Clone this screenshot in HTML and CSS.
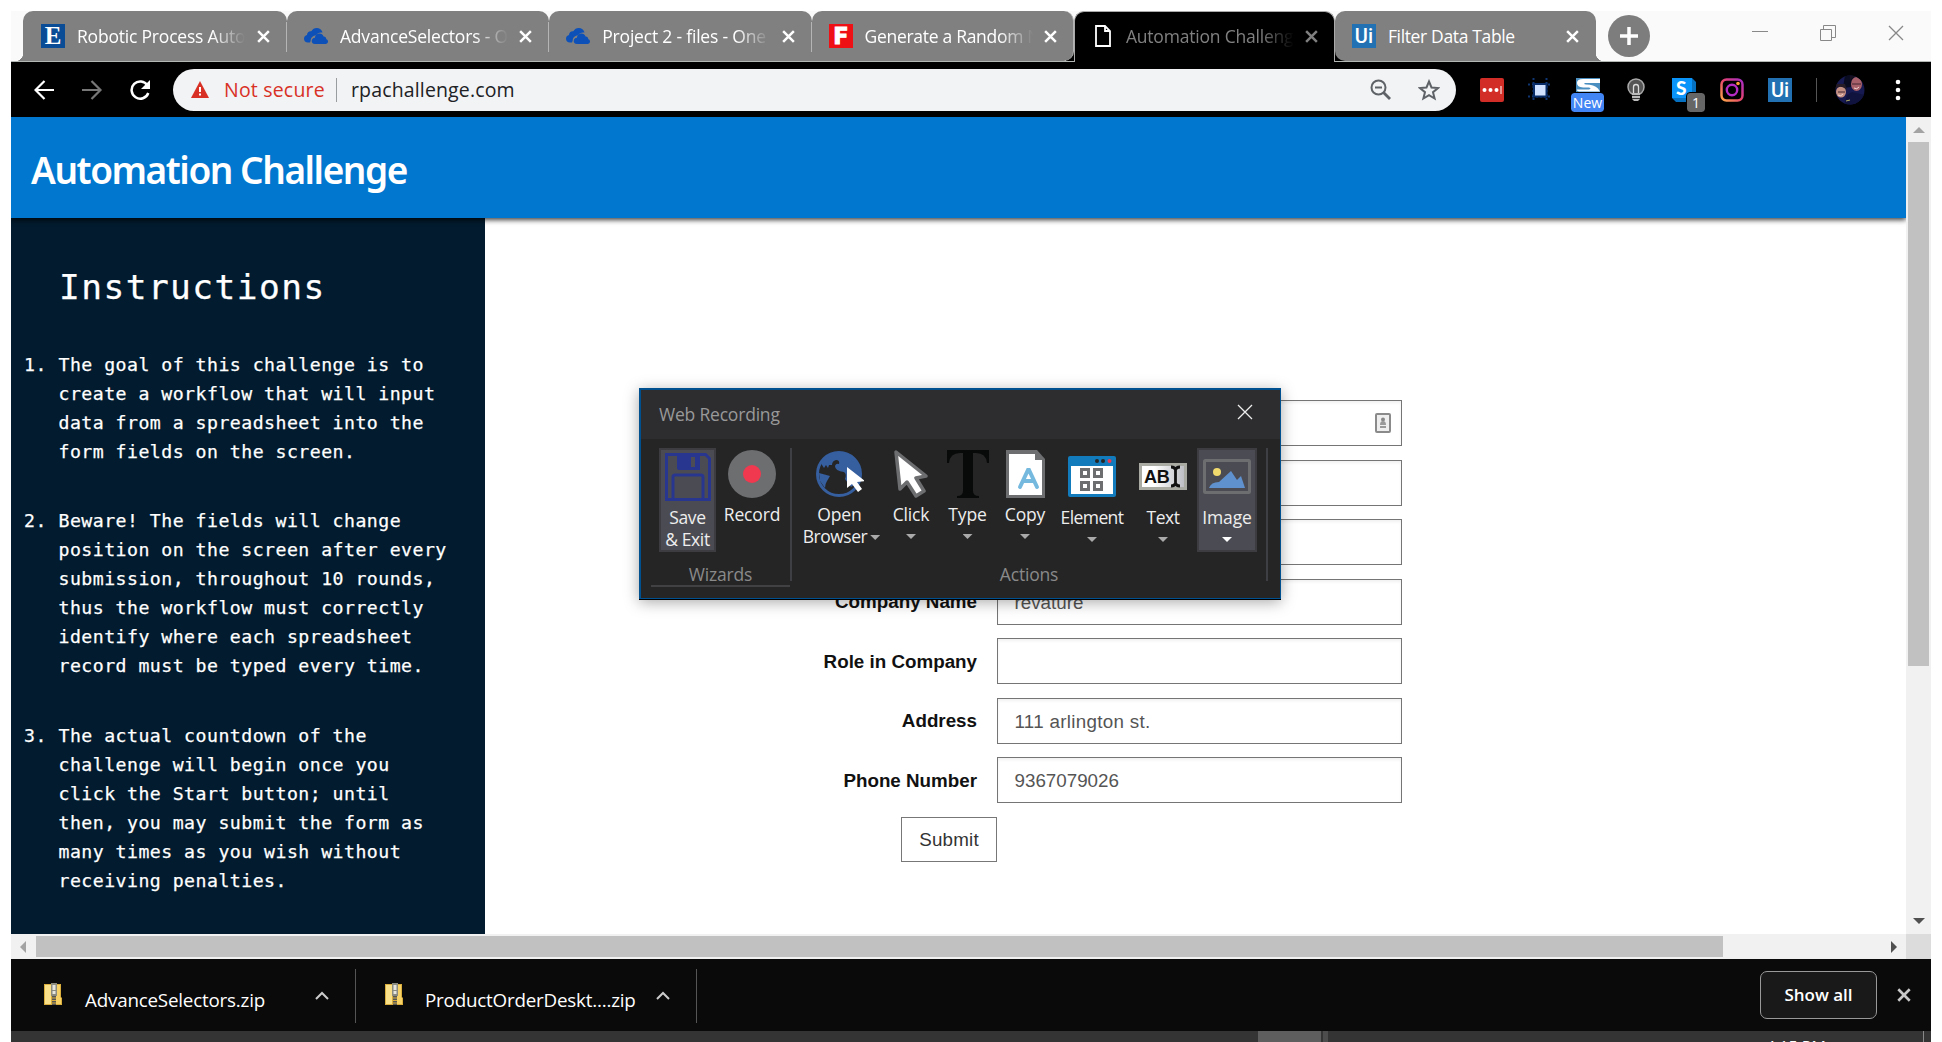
FILE: index.html
```html
<!DOCTYPE html>
<html lang="en">
<head>
<meta charset="utf-8">
<title>Automation Challenge</title>
<link rel="stylesheet" href="styles.css">
</head>
<body>
<svg class="defs" width="0" height="0">
  <symbol id="cloud" viewBox="0 0 24 16"><path fill="#0c50b8" d="M6 14.5H4C1.500 14.500 0 13 0 10.800c0-2 1.300-3.400 3-3.700C3 4.500 5 3 7.300 3.300 8.500 1.200 10.400 0 12.600 0c3 0 5.300 1.800 6 4.600-3-.6-5.300.5-6.400 2.600C9 7.500 7 9.500 6.800 11.500c0 1-.3 2-.8 3z"/><path fill="#0c50b8" d="M11 16c-2 0-3.300-1.200-3.300-3 0-1.900 1.300-3.200 3.200-3.300.2-2.500 2-4.200 4.500-4.200 2 0 3.500 1 4.200 2.900 1.700.1 2.700 1.100 2.700 2.800 1.100.3 1.700 1.100 1.700 2.300 0 1.500-1 2.500-2.600 2.500z"/></symbol>
  <symbol id="x" viewBox="0 0 14 14"><path d="M2 2l10 10M12 2L2 12" fill="none" stroke="currentColor" stroke-width="2.300"/></symbol>
  <symbol id="thinx" viewBox="0 0 16 16"><path d="M1 1l14 14M15 1L1 15" fill="none" stroke="currentColor" stroke-width="1.300"/></symbol>
  <symbol id="zip" viewBox="0 0 18 23"><path fill="#d9ae3c" d="M0 1h17v13l1 1v7H0z"/><path fill="#fbe08a" d="M1 2h6v19H1z"/><path fill="#f6d267" d="M12 2h4v12l1 1v6h-5z"/><path fill="#8b8b80" d="M7 0h6v13H7z"/><path fill="#e6e6df" d="M8.500 2h3v5h-3zM8.500 8h3v3h-3z"/><path d="M10 13v10" stroke="#555" stroke-width="4" stroke-dasharray="1.500 1"/></symbol>
  <symbol id="chev" viewBox="0 0 14 9"><path d="M1 8l6-6 6 6" fill="none" stroke="#ccc" stroke-width="2"/></symbol>
</svg>
<div class="screen">
  <div class="tabs">
    <div class="tab first"><span class="fav e">E</span><span class="title">Robotic Process Auto</span><svg class="close"><use href="#x"/></svg></div>
    <div class="tab"><svg class="fav cloud"><use href="#cloud"/></svg><span class="title">AdvanceSelectors - O</span><svg class="close"><use href="#x"/></svg></div>
    <div class="tab"><svg class="fav cloud"><use href="#cloud"/></svg><span class="title">Project 2 - files - One</span><svg class="close"><use href="#x"/></svg></div>
    <div class="tab last-before"><span class="fav f">F</span><span class="title tight">Generate a Random N</span><svg class="close"><use href="#x"/></svg></div>
    <div class="tab active"><svg class="fav page" viewBox="0 0 16 22"><path d="M1 1h9l5 5v15H1zM10 1v5h5" fill="none" stroke="#fff" stroke-width="1.800"/></svg><span class="title">Automation Challenge</span><svg class="close"><use href="#x"/></svg></div>
    <div class="tab end"><span class="fav ui">Ui</span><span class="title full">Filter Data Table</span><svg class="close"><use href="#x"/></svg></div>
    <div class="newtab"><svg width="42" height="42"><path d="M21 12v18M12 21h18" stroke="#fff" stroke-width="3.500"/></svg></div>
    <div class="winbtns">
      <svg width="16" height="16"><path d="M0 6.500h16" stroke="#888"/></svg>
      <svg width="16" height="16" fill="none" stroke="#888"><path d="M.5 4.500h11v11H.5zM3.500 4.500v-4h12v12h-4"/></svg>
      <svg width="16" height="16" color="#888"><use href="#thinx"/></svg>
    </div>
  </div>
  <div class="toolbar">
    <div class="nav">
      <svg width="22" height="22" fill="none" stroke="#fff" stroke-width="2.200"><path d="M20 11H2M10.500 2L1.500 11l9 9"/></svg>
      <svg width="22" height="22" fill="none" stroke="#777" stroke-width="2.200"><path d="M0 11h18M9.500 2l9 9-9 9"/></svg>
      <svg width="22" height="22"><path d="M17.500 6.500A8.600 8.600 0 1 0 18.300 14" fill="none" stroke="#fff" stroke-width="2.500"/><path d="M20 1v9h-9z" fill="#fff"/></svg>
    </div>
    <div class="omnibox">
      <svg width="18" height="17"><path d="M9 0l9 17H0z" fill="#d93025"/><path d="M9 6v5M9 12.500v2" stroke="#fff" stroke-width="2"/></svg>
      <span class="insecure">Not secure</span><i class="bar"></i><span class="url">rpachallenge.com</span>
      <svg class="mag" width="22" height="22" fill="none" stroke="#5f6368" stroke-width="2"><circle cx="8.500" cy="8.500" r="7"/><path d="M5 8.500h7"/><path d="M13.500 13.500l6.500 6.500" stroke-width="2.800"/></svg>
      <svg class="star" width="22" height="22" viewBox="0 0 22 22"><path d="M11 2.500l2.500 6 6.500.5-5 4.200 1.600 6.300L11 16.100l-5.600 3.400L7 13.200 2 9l6.500-.5z" fill="none" stroke="#5f6368" stroke-width="2"/></svg>
    </div>
    <div class="exts">
      <svg width="24" height="24"><rect width="24" height="24" rx="2" fill="#d32d27"/><circle cx="4.500" cy="12" r="2" fill="#fff"/><circle cx="10.500" cy="12" r="2" fill="#fff"/><circle cx="16.500" cy="12" r="2" fill="#fff"/><path d="M21 8v8" stroke="#fff"/></svg>
      <svg width="24" height="24"><path d="M0 6.500h24M0 18.500h24M5.500 0v24M18.500 0v24" stroke="#0f3672" stroke-width="2" stroke-dasharray="2 2"/><rect x="6" y="6" width="12.500" height="12.500" fill="#cfe1ff" stroke="#082c68" stroke-width="2"/></svg>
      <div class="ext"><svg width="24" height="24"><path fill="#4a8fc0" d="M0 0h24v14H0z"/><path fill="#fff" d="M24 1v4H9q-2 1 1 1.500 8 0 12 4l2 3H3q-3-1-2-2h12q3-1 0-2H7Q1 9 1 5q0-4 6-4z"/></svg><b class="badge new">New</b></div>
      <svg width="24" height="24"><circle cx="12" cy="9" r="8" fill="#555" stroke="#aaa" stroke-width="1.500"/><path d="M9.500 17V9q0-2.500 2.500-2.500T14.500 9v8" fill="none" stroke="#ddd" stroke-width="1.300"/><path d="M8 15h8v6l-2 2h-4l-2-2z" fill="#bbb"/><path d="M8 17.500h8M8 20.500h8" stroke="#333"/></svg>
      <div class="ext"><svg width="24" height="24"><path d="M0 0h20l4 4v20H4l-4-4z" fill="#0671c0"/><path d="M0 0h20v20H0z" fill="#0a94fa"/><text x="4" y="17" class="sletter">S</text></svg><b class="badge one">1</b></div>
      <svg width="24" height="24"><defs><linearGradient id="ig" x1="0" y1="1" x2="1" y2="0"><stop stop-color="#fda84a"/><stop offset=".5" stop-color="#e8456c"/><stop offset="1" stop-color="#a42bc6"/></linearGradient></defs><rect x="1.500" y="1.500" width="21" height="21" rx="5" fill="none" stroke="url(#ig)" stroke-width="2.500"/><circle cx="12" cy="12" r="5.200" fill="none" stroke="#b52bc3" stroke-width="2.400"/><circle cx="18" cy="5.500" r="1.800" fill="#ff9d35"/></svg>
      <span class="fav ui">Ui</span>
    </div>
    <i class="divider"></i>
    <svg class="avatar" width="30" height="30"><defs><clipPath id="av"><circle cx="15" cy="15" r="14.500"/></clipPath></defs><g clip-path="url(#av)"><path d="M0 0h30v30H0z" fill="#161a50"/><path d="M10 0h10l-4 12-8 1z" fill="#090b20"/><ellipse cx="21.500" cy="9" rx="5.500" ry="7" fill="#a8606a"/><path d="M15 6q5-8 13 0l1-7H15z" fill="#171020"/><ellipse cx="6" cy="17" rx="5" ry="5.500" fill="#c38f83"/><path d="M0 14q6-5 12 1l-2-6H0z" fill="#261c28"/><path d="M17 9h9M3 17h7" stroke="#432633"/><path d="M19 13q3 2 5-1M3 20q3 2 5-1" stroke="#f5d7d0" fill="none"/><path d="M12 20l5-3 13 3v10H9z" fill="#10133d"/><path d="M11 26l4-1" stroke="#b1ae68"/></g></svg>
    <svg class="dots" width="6" height="24" fill="#fff"><circle cx="3" cy="4" r="2.300"/><circle cx="3" cy="12" r="2.300"/><circle cx="3" cy="20" r="2.300"/></svg>
  </div>
  <div class="viewport">
    <div class="page">
      <header><h1>Automation Challenge</h1></header>
      <div class="main">
        <aside>
          <h2>Instructions</h2>
          <ol>
            <li><span>1.</span><p>The goal of this challenge is to<br>create a workflow that will input<br>data from a spreadsheet into the<br>form fields on the screen.</p></li>
            <li><span>2.</span><p>Beware! The fields will change<br>position on the screen after every<br>submission, throughout 10 rounds,<br>thus the workflow must correctly<br>identify where each spreadsheet<br>record must be typed every time.</p></li>
            <li><span>3.</span><p>The actual countdown of the<br>challenge will begin once you<br>click the Start button; until<br>then, you may submit the form as<br>many times as you wish without<br>receiving penalties.</p></li>
          </ol>
        </aside>
        <form>
          <div class="row"><label></label><div class="input card"><svg width="16" height="20"><rect x="1" y="1" width="14" height="18" rx="1" fill="#eee" stroke="#8a8a8a" stroke-width="2"/><circle cx="8" cy="6.500" r="2" fill="#888"/><path d="M5 12q0-4 3-4t3 4zM5 13h6v2H5z" fill="#999"/></svg></div></div>
          <div class="row"><label></label><div class="input"></div></div>
          <div class="row"><label></label><div class="input"></div></div>
          <div class="row"><label>Company Name</label><div class="input">revature</div></div>
          <div class="row"><label>Role in Company</label><div class="input"></div></div>
          <div class="row"><label>Address</label><div class="input addr">111 arlington st.</div></div>
          <div class="row"><label>Phone Number</label><div class="input">9367079026</div></div>
          <div class="submit">Submit</div>
        </form>
      </div>
    </div>
    <div class="vbar"><svg width="25" height="25"><path d="M7 16h12l-6-6z" fill="#a3a3a3"/></svg><i></i><svg width="25" height="25"><path d="M7 9h12l-6 6z" fill="#505050"/></svg></div>
    <div class="hbar"><svg width="25" height="25"><path d="M15 7v12l-6-6z" fill="#a3a3a3"/></svg><i></i><svg width="25" height="25"><path d="M10 7v12l6-6z" fill="#505050"/></svg></div>
    <div class="corner"></div>
  </div>
  <div class="downloads">
    <div class="dl d1"><svg class="zip"><use href="#zip"/></svg><span>AdvanceSelectors.zip</span><svg class="chev"><use href="#chev"/></svg></div>
    <div class="dl d2"><svg class="zip"><use href="#zip"/></svg><span>ProductOrderDeskt....zip</span><svg class="chev"><use href="#chev"/></svg></div>
    <div class="showall">Show all</div>
    <svg class="dlx" width="16" height="16"><use href="#x"/></svg>
  </div>
  <div class="taskbar"><i class="tb1"></i><i class="tb2"></i><span class="clock">4:15 PM</span><i class="tb3"></i></div>
</div>

<div class="dialog">
  <div class="dtitle"><span>Web Recording</span><svg width="16" height="16"><use href="#thinx"/></svg></div>
  <div class="ribbon">
    <div class="group wiz">
      <div class="tools">
        <div class="tool save boxed"><svg width="46" height="48" fill="none" stroke="#29368f" stroke-width="3"><path d="M1.500 1.500h39l4 4v41h-43z"/><path d="M8 46V24q0-2 2-2h26q2 0 2 2v22"/><path d="M12 2h23v15H14q-2 0-2-2z" fill="#29368f" stroke="none"/><path d="M26 4h4v10h-4z" fill="#4b4c55" stroke="none"/></svg><span class="lbl">Save<br>&amp; Exit</span></div>
        <div class="tool rec"><svg width="48" height="48"><circle cx="24" cy="24" r="24" fill="#6d6e70"/><circle cx="24" cy="24" r="9" fill="#f0384f"/></svg><span class="lbl">Record</span></div>
      </div>
      <div class="gname">Wizards</div>
    </div>
    <div class="group act">
      <div class="tools">
        <div class="tool open"><svg width="48" height="48"><circle cx="23" cy="24" r="21.500" fill="#252526" stroke="#365f9f" stroke-width="3"/><path d="M5 13Q12 2 23 2q12 0 18 9l4 12-4 10-6 4-6-8q2-5-1-7-9-1-9-6 1-3 4-2 1-4-3-4-4 1-4 5l-3 0-1 3-2-3-2 3-2-3zM3 23l11 3-3 5q-2 3-2 7l-5-7z" fill="#365f9f"/><path d="M31 17v21l5-4 6 8 4-3-5-7 8-1z" fill="#fff"/></svg><span class="lbl"><span class="first">Open</span><br>Browser<i class="tri side"></i></span></div>
        <div class="tool click"><svg width="34" height="48"><path d="M2 2l4 37 7-7 9 14 8-5-8-13 10-2z" fill="#fff" stroke="#6d6e70" stroke-width="3.500" stroke-linejoin="round"/></svg><span class="lbl">Click</span><i class="tri"></i></div>
        <div class="tool type"><svg width="42" height="48"><path d="M0 0h42v13h-2q-1-10-11-10h-3v38q0 5 6 5v2H10v-2q6 0 6-5V3h-3Q3 3 2 13H0z" fill="#080909"/></svg><span class="lbl">Type</span><i class="tri"></i></div>
        <div class="tool copy"><svg width="39" height="48"><path d="M0 0h31l8 9v39H0z" fill="#6d6e70"/><path d="M3 4h26v6h7v35H3z" fill="#fff"/><path d="M14 37l8-17h1l8 17M17 31h11" fill="none" stroke="#76b9df" stroke-width="4" stroke-linecap="round"/></svg><span class="lbl">Copy</span><i class="tri"></i></div>
        <div class="tool low element"><svg width="48" height="41"><rect width="48" height="41" rx="2" fill="#117bbb"/><path d="M3 10h42v28H3z" fill="#fff"/><g fill="none" stroke="#6d6e70" stroke-width="3"><path d="M13.500 13.500h7v7h-7zM26.500 13.500h7v7h-7zM13.500 26.500h7v7h-7zM26.500 26.500h7v7h-7z"/></g><circle cx="29" cy="5" r="2" fill="#252526"/><circle cx="35" cy="5" r="2" fill="#252526"/><circle cx="41.500" cy="5" r="2" fill="#f0384f"/></svg><span class="lbl">Element</span><i class="tri"></i></div>
        <div class="tool low text"><svg width="48" height="27"><defs><linearGradient id="tg"><stop offset=".3" stop-color="#fff"/><stop offset="1" stop-color="#bbbcc2"/></linearGradient></defs><rect x="1.500" y="1.500" width="45" height="24" fill="url(#tg)" stroke="#aaaca4" stroke-width="3"/><text x="5" y="20" class="ab">AB</text><path d="M32 4q4 0 4.500 3Q37 4 41 4M36.500 6v15M32 23q4 0 4.500-3 .5 3 4.500 3" fill="none" stroke="#111" stroke-width="2.800"/></svg><span class="lbl">Text</span><i class="tri"></i></div>
        <div class="tool boxed image"><svg width="48" height="35"><rect x="1.500" y="1.500" width="45" height="32" rx="1" fill="none" stroke="#6d6e70" stroke-width="3"/><circle cx="14" cy="13" r="4" fill="#f0d96d"/><path d="M6 29q2-6 10-6L28 12l6 9 4-4 4 12z" fill="#5f91cf"/></svg><span class="lbl">Image</span><i class="tri"></i></div>
      </div>
      <div class="gname">Actions</div>
    </div>
  </div>
</div>
</body>
</html>
```
FILE: styles.css
```css
* { box-sizing: border-box; }
body { margin: 0; width: 1942px; height: 1042px; overflow: hidden; background: #fff; font-family: "Open Sans", sans-serif; }
svg { display: block; flex: none; }
.defs { position: absolute; }
i { display: block; }
.screen { width: 1942px; height: 1042px; padding: 11px 11px 0; display: flex; flex-direction: column; overflow: hidden; }

/* tab strip */
.tabs { height: 51px; flex: none; display: flex; padding-left: 12px; background: #fafafa; border-bottom: 1px solid #b4b8b4; }
.tab { width: 262.300px; height: 50px; display: flex; align-items: center; background: #808080; border-radius: 10px 10px 0 0; padding: 0 16px 0 17px; color: #fff; position: relative; }
.tab::after { content: ""; position: absolute; right: 0; top: 11px; width: 1px; height: 30px; background: #b5b5b5; }
.tab.first { width: 264px; padding-left: 18px; }
.tab.first::before { content: ""; position: absolute; left: -8px; bottom: 0; width: 8px; height: 8px; background: radial-gradient(circle at 0 0, transparent 8px, #808080 8.500px); }
.tab.last-before { border-radius: 10px 10px 10px 0; border-right: 1px solid #b4b4b4; padding-right: 15px; }
.tab.last-before::after, .tab.active::after { display: none; }
.tab.active { width: 261px; height: 51px; background: #000; border: solid #aaa; border-width: 1px 1px 0; color: #808080; padding-left: 20px; padding-right: 15px; padding-bottom: 2px; }
.tab.end { width: 261px; border-radius: 10px 10px 0 10px; }
.tab.end::after { right: -8px; top: auto; bottom: 0; width: 8px; height: 8px; background: radial-gradient(circle at 100% 0, transparent 8px, #808080 8.500px); }
.tabs { background-image: linear-gradient(#000, #000); background-size: 280px 20px; background-position: 1055px 30px; background-repeat: no-repeat; }
.fav { width: 24px; height: 24px; flex: none; text-align: center; line-height: 24px; font-weight: 700; }
.fav.e { background: #0a4c95; font: 700 25px/23px "Liberation Serif", serif; }
.fav.f { background: #ee1014; font: 900 24px/24px Roboto, sans-serif; -webkit-text-stroke: 1px #fff; }
.fav.ui { background: #2271b2; color: #fff; font: 500 20px/25px Roboto, sans-serif; }
.fav.cloud { height: 16px; }
.fav.page { width: 16px; height: 22px; margin-right: 3px; }
.title { margin-left: 12px; margin-bottom: 1px; width: 168px; flex: none; font-size: 17.500px; letter-spacing: -.2px; white-space: nowrap; overflow: hidden; -webkit-mask-image: linear-gradient(90deg, #000 80%, transparent 100%); mask-image: linear-gradient(90deg, #000 80%, transparent 100%); }
.title.tight { letter-spacing: -.3px; }
.title.full { -webkit-mask-image: none; mask-image: none; letter-spacing: -.35px; }
.close { width: 15px; height: 15px; margin-left: auto; }
.newtab { width: 42px; height: 42px; margin: 4px 0 0 12px; border-radius: 50%; background: #7d7d7d; }
.winbtns { display: flex; gap: 52px; margin: 14px 27px 0 auto; }

/* toolbar */
.toolbar { height: 55px; flex: none; background: #000; display: flex; align-items: center; }
.nav { display: flex; gap: 26px; padding-left: 23px; width: 162px; }
.omnibox { width: 1283px; height: 42px; border-radius: 21px; background: #f1f3f4; display: flex; align-items: center; padding: 0 16px 0 18px; font-size: 19.500px; color: #202124; }
.insecure { color: #d93025; margin-left: 15px; width: 101px; white-space: nowrap; letter-spacing: .2px; }
.url { letter-spacing: .15px; }
.bar { width: 1px; height: 24px; background: #9a9da0; margin: 0 14px 0 11px; }
.mag { margin-left: auto; margin-right: 26px; }
.exts { display: flex; gap: 24px; margin-left: 24px; }
.ext { position: relative; width: 24px; height: 24px; }
.badge { position: absolute; top: 15px; height: 19px; border-radius: 3px; color: #fff; font: 14px/19px "Open Sans", sans-serif; text-align: center; outline: 1px solid #000; }
.badge.new { left: -5px; width: 33px; background: #4285f4; }
.badge.one { left: 15px; width: 18px; background: #666; }
.sletter { font: 900 19px Lato, sans-serif; fill: #fff; }
.divider { width: 1px; height: 24px; background: #555; margin: 0 18px 0 24px; }
.dots { margin-left: 30px; }
.insecure, .url { margin-bottom: 1px; }

/* web page */
.viewport { height: 842px; flex: none; display: grid; grid-template: 817px 25px / 1895px 25px; }
.page { display: flex; flex-direction: column; overflow: hidden; }
header { height: 101px; flex: none; background: #0177cf; box-shadow: 0 2px 5px rgba(0,0,0,.75); z-index: 1; padding-left: 20px; }
h1 { margin: 0; font: 600 37px/106px "Noto Sans", sans-serif; letter-spacing: -1.450px; color: #fff; }
.main { flex: 1; display: flex; }
aside { width: 474px; background: #021b2e; color: #fff; font: 18.200px/29px "DejaVu Sans Mono", monospace; letter-spacing: .47px; padding: 45px 0 0 13px; -webkit-text-stroke: .25px #fff; }
h2 { margin: 0 0 39px 35px; font-size: 34.500px; line-height: 48px; font-weight: 400; letter-spacing: 1.450px; }
ol { margin: 0; padding: 0; list-style: none; }
li { display: flex; margin-bottom: 40px; }
li:nth-child(2) { margin-bottom: 41px; }
li span { width: 34.500px; }
p { margin: 0; white-space: nowrap; }
form { padding: 182px 0 0 338px; font: 18.800px "Liberation Sans", sans-serif; }
.row { display: flex; align-items: center; height: 46px; margin-bottom: 13.500px; }
label { width: 154px; margin-right: 20px; padding-top: 1px; text-align: right; font-weight: 700; color: #111; white-space: nowrap; }
.input { width: 405px; height: 46px; border: 1px solid #757575; padding: 0 16.500px; line-height: 46px; color: #555; box-shadow: inset 0 2px 3px rgba(0,0,0,.06); }
.input.addr { letter-spacing: .3px; }
.input.card { display: flex; align-items: center; justify-content: flex-end; padding-right: 10px; }
.submit { width: 96px; height: 45px; margin-left: 78px; border: 1px solid #777; text-align: center; line-height: 43px; letter-spacing: .2px; color: #333; }
.vbar { background: #f1f1f1; display: flex; flex-direction: column; }
.vbar i { width: 21px; height: 524px; margin: 0 2px auto; background: #c1c1c1; }
.hbar { background: #f1f1f1; display: flex; }
.hbar i { height: 21px; width: 1687px; margin: 2px auto 2px 0; background: #c1c1c1; }
.corner { background: #dcdcdc; }

/* downloads */
.downloads { height: 72px; flex: none; background: #0a0a0a; display: flex; padding-top: 10px; color: #fff; }
.dl { height: 54px; display: flex; border-right: 1px solid #555; padding-left: 33px; font-size: 18.800px; line-height: 26px; white-space: nowrap; }
.dl.d1 { width: 345px; }
.dl.d2 { width: 341px; padding-left: 29px; }
.dl span { margin: 18px 0 0 23px; letter-spacing: -.2px; }
.dl.d2 span { margin-left: 22px; }
.zip { width: 18px; height: 23px; margin-top: 14px; }
.chev { width: 14px; height: 9px; margin: 22px 26px 0 auto; }
.showall { margin-left: auto; width: 117px; height: 48px; margin-top: 2px; border: 1px solid #999; border-radius: 7px; background: #191919; text-align: center; font-size: 17px; font-weight: 600; line-height: 45px; }
.dlx { color: #c8c8c8; margin: 18px 19px 0 19px; }
.taskbar { height: 11px; flex: none; background: #343434; display: flex; overflow: hidden; }
.tb1 { width: 63px; margin-left: 1247px; background: #5e5e5e; }
.tb2 { width: 5px; margin-left: 2px; background: #4d4d4d; }
.clock { margin-left: 438px; width: 70px; color: #fff; font-size: 16px; line-height: 24px; padding-top: 4px; white-space: nowrap; }
.tb3 { width: 1px; margin-left: auto; margin-right: 7px; background: #888; }

/* recorder window, floating above the browser */
.dialog { position: absolute; left: 639px; top: 388px; width: 642px; height: 211px; background: #252526; border: 2px solid #00508f; border-width: 2px 1px 1px 2px; box-shadow: 0 1px 0 #000, 0 3px 14px rgba(0,0,0,.35); color: #eee; font-size: 17.500px; }
.dtitle { height: 49px; background: #2d2d30; display: flex; justify-content: space-between; padding: 14px 27px 0 18px; }
.dtitle span { color: #999; line-height: 22px; margin-top: -1px; letter-spacing: -.2px; }
.ribbon { display: flex; padding-top: 9px; }
.group { height: 133px; display: flex; flex-direction: column; border-right: 2px solid #3e3e45; }
.wiz { width: 151px; padding-left: 10px; }
.act { width: 476px; }
.tools { height: 104px; flex: none; display: flex; }
.tool { display: flex; flex-direction: column; align-items: center; padding-top: 2px; text-align: center; line-height: 22px; white-space: nowrap; letter-spacing: -.15px; }
.lbl { margin-top: 5px; position: relative; }
.boxed { background: #4b4c53; border: 2px solid #3d3d41; }
.save { width: 57px; margin-left: 8px; padding-top: 3px; }
.save .lbl { letter-spacing: -.4px; margin-top: 5px; }
.rec { width: 72px; }
.open { width: 96px; }
.open .lbl { letter-spacing: -.5px; margin-right: 10px; }
.open .first { letter-spacing: -.1px; padding-left: 9px; }
.click { width: 46px; }
.type { width: 67px; }
.copy { width: 48px; }
.element { width: 86px; padding-top: 8px; }
.element .lbl { margin-top: 9px; letter-spacing: -.6px; }
.text { width: 56px; padding-top: 15px; }
.text .lbl { margin-top: 16px; letter-spacing: -.5px; }
.image { width: 60px; margin-left: 6px; padding-top: 9px; }
.image .lbl { margin-top: 12px; letter-spacing: -.1px; }
.tri { width: 10px; height: 5px; margin-top: 9px; background: #aaa; clip-path: polygon(0 0, 100% 0, 50% 100%); }
.tri.side { position: absolute; right: -13px; top: 23px; }
.image .tri { background: #fff; }
.gname { text-align: center; color: #8a8a8a; line-height: 24px; height: 25px; flex: none; margin-top: 10px; letter-spacing: -.2px; }
.wiz .gname { border-bottom: 2px solid #414144; }
.ab { font: 700 18px "Liberation Sans", sans-serif; fill: #111; }
```
